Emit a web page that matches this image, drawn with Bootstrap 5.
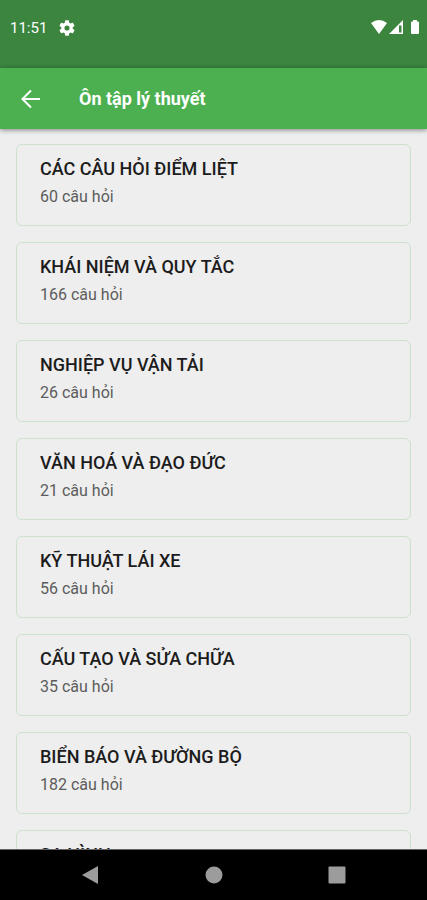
<!DOCTYPE html>
<html lang="vi">
<head>
<meta charset="utf-8">
<meta name="viewport" content="width=device-width, initial-scale=1">
<title>Ôn tập lý thuyết</title>
<link href="https://cdn.jsdelivr.net/npm/bootstrap@5.3.0/dist/css/bootstrap.min.css" rel="stylesheet">
<style>
body { font-family: Roboto, "Noto Sans", sans-serif; background: #eee; }
.status-bar { background: #3b853f; color: #fff; height: 68px; padding: 16px 7px 0 10px; font-size: 15px; line-height: 24px; }
.status-bar svg, .app-bar svg, .system-bar svg { display: block; }
.app-bar { background: #4caf50; height: 61px; padding: 0 20px; gap: 37px; box-shadow: 0 1px 5px rgba(0,0,0,.45); z-index: 1; }
.app-bar h1 { font-size: 18px; line-height: 24px; font-weight: 700; }
.topic-list { gap: 16px; padding: 15px 16px; overflow-y: auto; scrollbar-width: none; min-height: 0; }
.topic-list::-webkit-scrollbar { display: none; }
.topic { border: 1px solid #cde2ce; border-radius: 6px; padding: 10px 23px 14px; color: #1c1c1c; }
.topic-name { font-size: 18px; line-height: 28px; font-weight: 500; }
.topic-count { font-size: 16px; line-height: 28px; color: #5c5c5c; }
.system-bar { background: #000; height: 51px; padding: 0 81px; border-top: 1px solid #666; }
</style>
<script src="https://cdn.jsdelivr.net/npm/bootstrap@5.3.0/dist/js/bootstrap.bundle.min.js" defer></script>
</head>
<body>
<div class="d-flex flex-column vh-100 overflow-hidden">
  <div class="status-bar d-flex align-items-start flex-shrink-0">
    <div class="d-flex align-items-center gap-2">
      <span>11:51</span>
      <svg class="ms-1" width="16" height="24" viewBox="2 -1 20 26" fill="#fff" aria-hidden="true"><path d="M19.14 12.94c.04-.3.06-.61.06-.94s-.02-.64-.07-.94l2.03-1.58a.49.49 0 0 0 .12-.61l-1.92-3.32a.49.49 0 0 0-.59-.22l-2.39.96a7 7 0 0 0-1.62-.94l-.36-2.54a.48.48 0 0 0-.48-.41h-3.84a.47.47 0 0 0-.47.41l-.36 2.54c-.59.24-1.13.57-1.62.94l-2.39-.96a.48.48 0 0 0-.59.22L2.74 8.87a.47.47 0 0 0 .12.61l2.03 1.58c-.05.3-.09.63-.09.94s.02.64.07.94l-2.03 1.58a.49.49 0 0 0-.12.61l1.92 3.32c.12.22.37.29.59.22l2.39-.96c.5.38 1.03.7 1.62.94l.36 2.54c.05.24.24.41.48.41h3.84c.24 0 .44-.17.47-.41l.36-2.54c.59-.24 1.13-.56 1.62-.94l2.39.96c.22.08.47 0 .59-.22l1.92-3.32a.47.47 0 0 0-.12-.61zM12 15.2a3.2 3.2 0 1 1 0-6.4 3.2 3.2 0 0 1 0 6.4z"/></svg>
    </div>
    <svg class="ms-auto" width="50" height="24" viewBox="0 0 50 24" fill="#fff" aria-hidden="true">
      <path d="M1 7q8-6 16 0l-8 11z"/>
      <path fill-rule="evenodd" d="M33 4v14H19zM29 9.500v7h2.500v-7z"/>
      <path d="M43 4h4v1.500h1q1 0 1 1V17q0 1-1 1h-6q-1 0-1-1V6.500q0-1 1-1h1z"/>
    </svg>
  </div>
  <header class="app-bar d-flex align-items-center flex-shrink-0 position-relative text-white">
    <button type="button" class="btn p-0 border-0 text-white" aria-label="Quay lại">
      <svg width="22" height="22" viewBox="0 0 22 22" fill="none" stroke="currentColor" stroke-width="2"><path d="M20 11H3M11 2.500 2.500 11l8.500 8.500"/></svg>
    </button>
    <h1 class="mb-0">Ôn tập lý thuyết</h1>
  </header>
  <main class="topic-list d-flex flex-column flex-grow-1">
    <a href="#" class="topic d-block flex-shrink-0 text-decoration-none"><div class="topic-name">CÁC CÂU HỎI ĐIỂM LIỆT</div><div class="topic-count">60 câu hỏi</div></a>
    <a href="#" class="topic d-block flex-shrink-0 text-decoration-none"><div class="topic-name">KHÁI NIỆM VÀ QUY TẮC</div><div class="topic-count">166 câu hỏi</div></a>
    <a href="#" class="topic d-block flex-shrink-0 text-decoration-none"><div class="topic-name">NGHIỆP VỤ VẬN TẢI</div><div class="topic-count">26 câu hỏi</div></a>
    <a href="#" class="topic d-block flex-shrink-0 text-decoration-none"><div class="topic-name">VĂN HOÁ VÀ ĐẠO ĐỨC</div><div class="topic-count">21 câu hỏi</div></a>
    <a href="#" class="topic d-block flex-shrink-0 text-decoration-none"><div class="topic-name">KỸ THUẬT LÁI XE</div><div class="topic-count">56 câu hỏi</div></a>
    <a href="#" class="topic d-block flex-shrink-0 text-decoration-none"><div class="topic-name">CẤU TẠO VÀ SỬA CHỮA</div><div class="topic-count">35 câu hỏi</div></a>
    <a href="#" class="topic d-block flex-shrink-0 text-decoration-none"><div class="topic-name">BIỂN BÁO VÀ ĐƯỜNG BỘ</div><div class="topic-count">182 câu hỏi</div></a>
    <a href="#" class="topic d-block flex-shrink-0 text-decoration-none"><div class="topic-name">SA HÌNH</div></a>
  </main>
  <nav class="system-bar d-flex align-items-center justify-content-between flex-shrink-0" aria-label="Điều hướng hệ thống">
    <button type="button" class="btn p-0 border-0" aria-label="Trở về"><svg width="18" height="20" viewBox="0 0 18 20" fill="#9c9c9c"><path d="M17 1v18L1 10z"/></svg></button>
    <button type="button" class="btn p-0 border-0" aria-label="Màn hình chính"><svg width="18" height="18" viewBox="0 0 18 18" fill="#9c9c9c"><circle cx="9" cy="9" r="8.500"/></svg></button>
    <button type="button" class="btn p-0 border-0" aria-label="Ứng dụng gần đây"><svg width="18" height="18" viewBox="0 0 18 18" fill="#9c9c9c"><rect x="0.500" y="0.500" width="17" height="17" rx="1"/></svg></button>
  </nav>
</div>
</body>
</html>
